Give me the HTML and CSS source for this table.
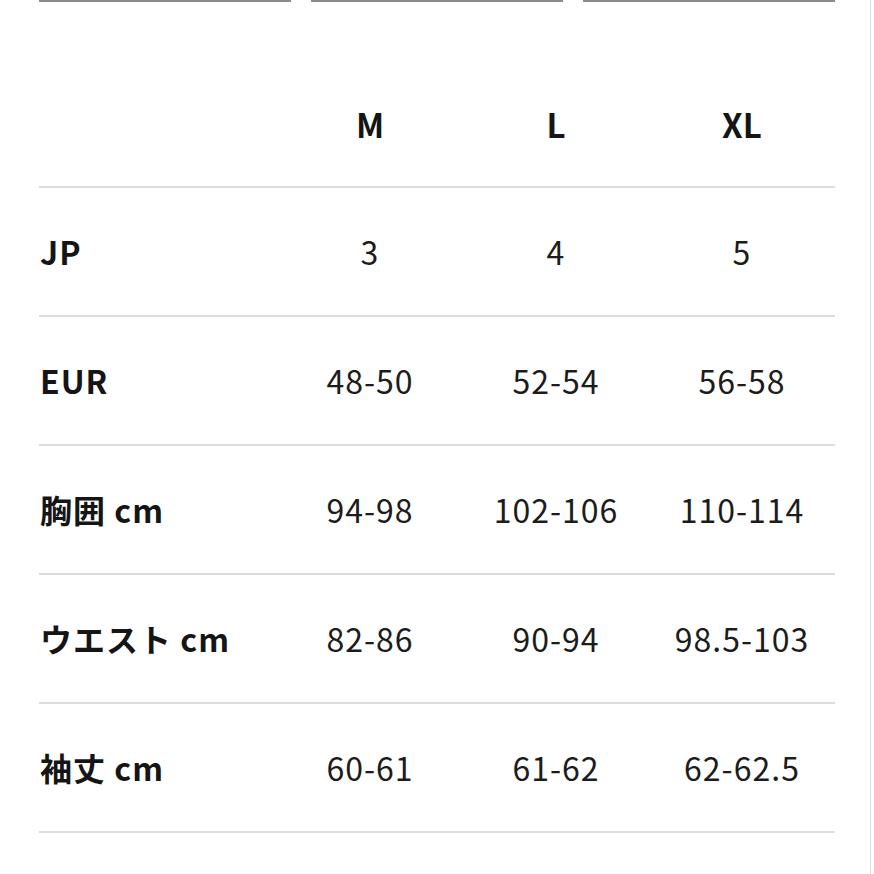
FILE: index.html
```html
<!DOCTYPE html>
<html lang="ja">
<head>
<meta charset="utf-8">
<title>サイズ表</title>
<link rel="stylesheet" href="styles.css">
</head>
<body>
<div class="page">
  <div class="tabs">
    <span class="tab"></span>
    <span class="tab"></span>
    <span class="tab"></span>
  </div>
  <div class="table">
    <div class="row head">
      <div class="cell label"></div>
      <div class="cell size">M</div>
      <div class="cell size">L</div>
      <div class="cell size">XL</div>
    </div>
    <div class="row">
      <div class="cell label">JP</div>
      <div class="cell val">3</div>
      <div class="cell val">4</div>
      <div class="cell val">5</div>
    </div>
    <div class="row">
      <div class="cell label">EUR</div>
      <div class="cell val">48-50</div>
      <div class="cell val">52-54</div>
      <div class="cell val">56-58</div>
    </div>
    <div class="row">
      <div class="cell label">胸囲 cm</div>
      <div class="cell val">94-98</div>
      <div class="cell val">102-106</div>
      <div class="cell val">110-114</div>
    </div>
    <div class="row">
      <div class="cell label">ウエスト cm</div>
      <div class="cell val">82-86</div>
      <div class="cell val">90-94</div>
      <div class="cell val">98.5-103</div>
    </div>
    <div class="row">
      <div class="cell label">袖丈 cm</div>
      <div class="cell val">60-61</div>
      <div class="cell val">61-62</div>
      <div class="cell val">62-62.5</div>
    </div>
  </div>
</div>
</body>
</html>
```
FILE: styles.css
```css
html, body {
  margin: 0;
  padding: 0;
  background: #ffffff;
}

body {
  font-family: "Noto Sans CJK JP", "Noto Sans", sans-serif;
  color: #151515;
}

.page {
  width: 870px;
  height: 874px;
  border-right: 1px solid #dedede;
  box-sizing: content-box;
}

.tabs {
  display: flex;
  gap: 20px;
  margin-left: 39px;
  width: 796px;
}

.tab {
  flex: 1;
  height: 2px;
  background: #8a8a8a;
}

.table {
  margin-left: 39px;
  width: 796px;
}

.row {
  display: grid;
  grid-template-columns: 238px repeat(3, 186px);
  align-items: center;
  height: 127px;
  border-bottom: 2px solid #dcdcdc;
}

.row.head {
  height: 122px;
  padding-top: 62px;
}

.cell {
  line-height: 1.2;
}

.label {
  font-size: 32px;
  font-weight: 700;
  letter-spacing: 1px;
  padding-left: 1px;
}

.size {
  font-size: 33px;
  font-weight: 700;
  text-align: center;
}

.val {
  font-size: 32px;
  font-weight: 400;
  letter-spacing: 1px;
  text-align: center;
  color: #1c1c1c;
}
```
